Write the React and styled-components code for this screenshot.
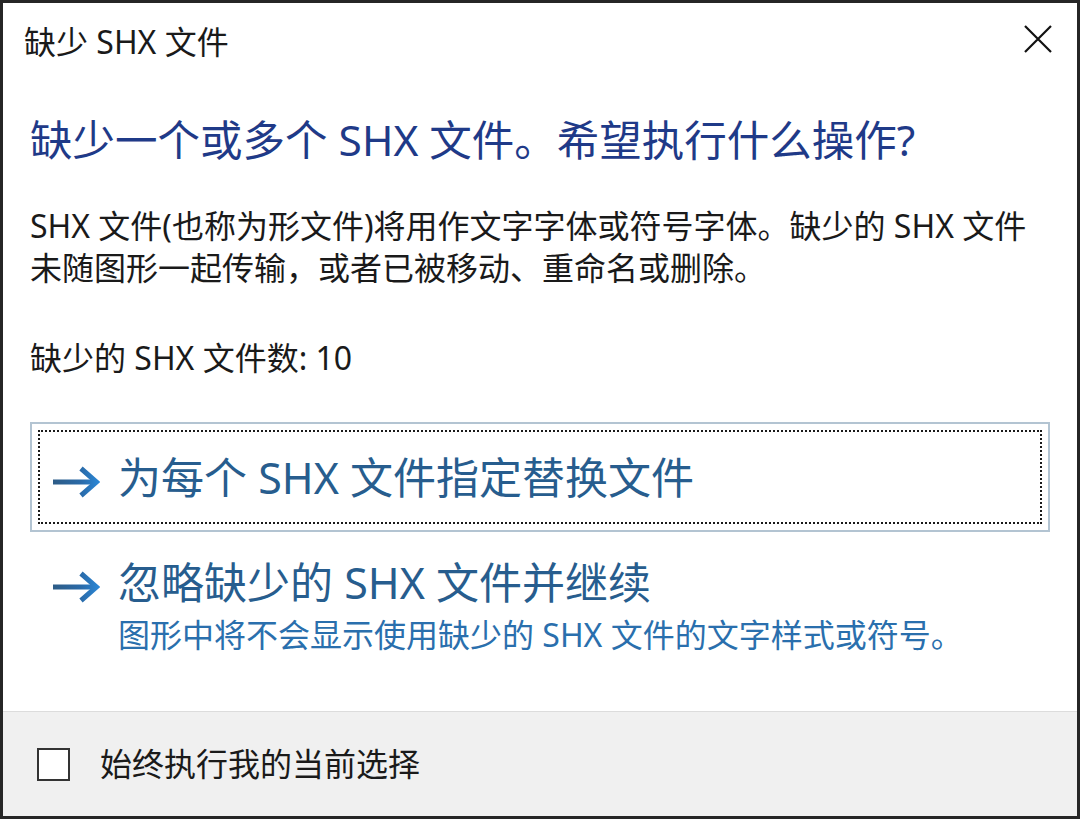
import { createGlobalStyle, styled } from "styled-components";

const GlobalStyle = createGlobalStyle`
  html, body {
    margin: 0;
    padding: 0;
    background: #ffffff;
  }
  body {
    font-family: "Noto Sans", "Noto Sans CJK SC", sans-serif;
    color: #1a1a1a;
  }
`;

const Window = styled.div`
  width: 1080px;
  height: 819px;
  box-sizing: border-box;
  border: 3px solid #262626;
  background: #ffffff;
  display: flex;
  flex-direction: column;
`;

const TitleBar = styled.div`
  height: 78px;
  display: flex;
  align-items: center;
  justify-content: space-between;
  padding: 0 25px 0 21px;
`;

const Title = styled.div`
  font-size: 32px;
  line-height: 42px;
  color: #1a1a1a;
`;

const CloseBtn = styled.div`
  width: 28px;
  height: 28px;
  display: flex;
  align-items: center;
  justify-content: center;
  margin-top: -6px;
`;

const Main = styled.div`
  padding: 0 27px;
  display: flex;
  flex-direction: column;
`;

const Heading = styled.h1`
  margin: 31px 0 0 0;
  font-size: 42.5px;
  line-height: 56px;
  font-weight: 400;
  color: #1f3a88;
`;

const Text = styled.p`
  margin: ${(p) => p.$top || 0}px 0 0 0;
  font-size: 32px;
  line-height: 42px;
  color: #1a1a1a;
`;

const CommandLink = styled.div`
  margin-top: ${(p) => p.$top}px;
  box-sizing: border-box;
  border: 2px solid ${(p) => (p.$focused ? "#b3c4d2" : "transparent")};
  padding: 6px;
  display: flex;
`;

const FocusRing = styled.div`
  flex: 1;
  display: flex;
  align-items: flex-start;
  padding: ${(p) => (p.$focused ? "18px 12px 12px 12px" : "1px 12px 0 12px")};
  border: 2px dotted ${(p) => (p.$focused ? "#1a1a1a" : "transparent")};
`;

const ArrowBox = styled.div`
  width: 48px;
  height: 56px;
  padding-top: 4px;
  display: flex;
  align-items: center;
  margin-right: 18px;
  flex-shrink: 0;
`;

const LinkText = styled.div`
  display: flex;
  flex-direction: column;
`;

const LinkTitle = styled.div`
  font-size: 43px;
  line-height: 56px;
  color: #275d8e;
`;

const LinkNote = styled.div`
  font-size: 32px;
  line-height: 42px;
  color: #2a6fad;
  margin-top: 3px;
`;

const Footer = styled.div`
  margin-top: auto;
  height: 104px;
  border-top: 1px solid #dcdcdc;
  background: #f0f0f0;
  display: flex;
  align-items: center;
  padding-left: 34px;
`;

const Checkbox = styled.div`
  width: 29px;
  height: 29px;
  border: 2px solid #333333;
  background: #ffffff;
`;

const CheckLabel = styled.div`
  margin-left: 30px;
  font-size: 32px;
  line-height: 42px;
  color: #1a1a1a;
`;

function Arrow({ id }) {
  return (
    <svg width="48" height="32" viewBox="0 0 48 32">
      <defs>
        <linearGradient id={id} gradientUnits="userSpaceOnUse" x1="0" y1="0" x2="48" y2="0">
          <stop offset="0" stopColor="#2d5b85" />
          <stop offset="0.6" stopColor="#2a6aa8" />
          <stop offset="1" stopColor="#2a88d8" />
        </linearGradient>
      </defs>
      <path d="M1 16 H43" stroke={`url(#${id})`} strokeWidth="5" fill="none" />
      <path
        d="M29 2.5 L44.5 16 L29 29.5"
        stroke={`url(#${id})`}
        strokeWidth="5"
        fill="none"
        strokeLinejoin="miter"
      />
    </svg>
  );
}

export default function App() {
  return (
    <>
      <GlobalStyle />
      <Window>
        <TitleBar>
          <Title>缺少 SHX 文件</Title>
          <CloseBtn>
            <svg width="28" height="28" viewBox="0 0 28 28">
              <path d="M1 1 L27 27 M27 1 L1 27" stroke="#111" strokeWidth="2.2" />
            </svg>
          </CloseBtn>
        </TitleBar>
        <Main>
          <Heading>缺少一个或多个 SHX 文件。希望执行什么操作?</Heading>
          <Text $top={37}>
            SHX 文件(也称为形文件)将用作文字字体或符号字体。缺少的 SHX 文件
            <br />
            未随图形一起传输，或者已被移动、重命名或删除。
          </Text>
          <Text $top={48}>缺少的 SHX 文件数: 10</Text>
          <CommandLink $top={43} $focused>
            <FocusRing $focused>
              <ArrowBox>
                <Arrow id="arrow-a" />
              </ArrowBox>
              <LinkText>
                <LinkTitle>为每个 SHX 文件指定替换文件</LinkTitle>
              </LinkText>
            </FocusRing>
          </CommandLink>
          <CommandLink $top={12}>
            <FocusRing>
              <ArrowBox>
                <Arrow id="arrow-b" />
              </ArrowBox>
              <LinkText>
                <LinkTitle>忽略缺少的 SHX 文件并继续</LinkTitle>
                <LinkNote>图形中将不会显示使用缺少的 SHX 文件的文字样式或符号。</LinkNote>
              </LinkText>
            </FocusRing>
          </CommandLink>
        </Main>
        <Footer>
          <Checkbox />
          <CheckLabel>始终执行我的当前选择</CheckLabel>
        </Footer>
      </Window>
    </>
  );
}
